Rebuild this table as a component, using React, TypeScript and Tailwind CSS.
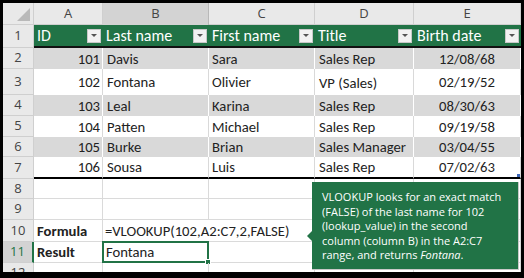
import React from "react";

const colW = ["w-[69px]", "w-[106px]", "w-[106px]", "w-[99px]", "w-[107px]"];
const letters = ["A", "B", "C", "D", "E"];
const headers = ["ID", "Last name", "First name", "Title", "Birth date"];

const people = [
  { id: 101, last: "Davis", first: "Sara", title: "Sales Rep", born: "12/08/68", h: "h-[21px]" },
  { id: 102, last: "Fontana", first: "Olivier", title: "VP (Sales)", born: "02/19/52", h: "h-[26px]" },
  { id: 103, last: "Leal", first: "Karina", title: "Sales Rep", born: "08/30/63", h: "h-[21px]" },
  { id: 104, last: "Patten", first: "Michael", title: "Sales Rep", born: "09/19/58", h: "h-[21px]" },
  { id: 105, last: "Burke", first: "Brian", title: "Sales Manager", born: "03/04/55", h: "h-[20px]" },
  { id: 106, last: "Sousa", first: "Luis", title: "Sales Rep", born: "07/02/63", h: "h-[22px]" },
];

const RowNum = ({ n, active }: { n: number; active?: boolean }) => (
  <div
    className={
      active
        ? "w-[31px] shrink-0 flex items-center justify-center bg-[#d3d3d3] border-b border-[#cfcfcf] border-r-2 border-r-[#217346] text-[#217346] text-[13px] font-['Open_Sans',sans-serif]"
        : "w-[31px] shrink-0 flex items-center justify-center bg-[#e9e9e9] border-b border-r border-[#cfcfcf] text-[#444] text-[13px] font-['Open_Sans',sans-serif]"
    }
  >
    {n}
  </div>
);

const FilterBtn = () => (
  <div className="w-[14px] h-[14px] shrink-0 flex items-center justify-center bg-[#f2f2f2] border border-[#c8c8c8]">
    <div className="w-0 h-0 border-l-[3px] border-r-[3px] border-t-[3px] border-l-transparent border-r-transparent border-t-[#555]" />
  </div>
);

const Tooltip = () => (
  <div className="absolute left-[309px] top-[179px] w-[207px] h-[88px] bg-[#217346] border-r border-b border-[#c9c9c9] pl-[10px] pt-[8px] text-white text-[11px] leading-[14.6px] font-['Open_Sans',sans-serif]">
    <div className="absolute -left-[5px] top-[49px] w-0 h-0 border-t-[5px] border-b-[5px] border-r-[5px] border-t-transparent border-b-transparent border-r-[#217346]" />
    VLOOKUP looks for an exact match
    <br />
    (FALSE) of the last name for 102
    <br />
    (lookup_value) in the second
    <br />
    column (column B) in the A2:C7
    <br />
    range, and returns <i>Fontana</i>.
  </div>
);

export default function App() {
  return (
    <div className="w-[524px] h-[278px] bg-black pt-[3px] pl-[3px]">
      <div className="relative w-[518px] h-[269px] overflow-hidden bg-white text-[#222] text-[14.67px] font-['Carlito',sans-serif]">
        {/* column letters */}
        <div className="flex h-[22px]">
          <div className="relative w-[31px] shrink-0 bg-[#e9e9e9] border-r border-b border-[#cfcfcf]">
            <div className="absolute right-[3px] bottom-[3px] w-0 h-0 border-l-[13px] border-b-[13px] border-l-transparent border-b-[#b9b9b9]" />
          </div>
          {letters.map((l, i) => (
            <div
              key={l}
              className={
                l === "B"
                  ? `${colW[i]} shrink-0 flex items-center justify-center bg-[#d3d3d3] border-r border-[#b8b8b8] text-[#444] text-[13px] font-['Open_Sans',sans-serif]`
                  : `${colW[i]} shrink-0 flex items-center justify-center bg-[#e9e9e9] border-r border-b border-[#cfcfcf] text-[#444] text-[13px] font-['Open_Sans',sans-serif]`
              }
            >
              {l}
            </div>
          ))}
        </div>

        {/* table header */}
        <div className="flex h-[23px]">
          <RowNum n={1} />
          {headers.map((h, i) => (
            <div
              key={h}
              className={`${colW[i]} shrink-0 flex items-center justify-between bg-[#217346] border-b-2 border-[#111] pl-[3px] pr-[2px] text-white text-[16px]`}
            >
              <span>{h}</span>
              <FilterBtn />
            </div>
          ))}
        </div>

        {/* table rows */}
        {people.map((p, r) => {
          const band = r % 2 === 0;
          const last = r === people.length - 1;
          const cell = `shrink-0 flex items-center border-r ${band ? "bg-[#d9d9d9] border-white" : "bg-white border-[#d9d9d9]"} ${last ? "border-b-2 border-b-black" : ""}`;
          return (
            <div key={p.id} className={`flex ${p.h}`}>
              <RowNum n={r + 2} />
              <div className={`${colW[0]} ${cell} justify-end pr-[2px]`}>{p.id}</div>
              <div className={`${colW[1]} ${cell} pl-[4px]`}>{p.last}</div>
              <div className={`${colW[2]} ${cell} pl-[3px]`}>{p.first}</div>
              <div className={`${colW[3]} ${cell} pl-[4px] ${p.id === 102 ? "items-end pb-[1px]" : ""}`}>{p.title}</div>
              <div className={`${colW[4]} ${cell} relative justify-center`}>
                {p.born}
                {last && <div className="absolute right-0 bottom-0 w-[3px] h-[3px] bg-[#3c66b8]" />}
              </div>
            </div>
          );
        })}

        {/* rows 8 - 12 */}
        {[8, 9, 10, 11, 12].map((n) => (
          <div key={n} className={`flex ${n === 10 ? "h-[22px]" : n === 8 ? "h-[20px]" : "h-[21px]"}`}>
            <RowNum n={n} active={n === 11} />
            <div className={`${colW[0]} shrink-0 flex items-center pl-[3px] border-r border-b border-[#dadada] font-bold`}>
              {n === 10 ? "Formula" : n === 11 ? "Result" : ""}
            </div>
            <div
              className={`${colW[1]} shrink-0 relative flex items-center pl-[2px] whitespace-nowrap border-b border-[#dadada] ${n === 10 ? "" : "border-r"}`}
            >
              {n === 10 && "=VLOOKUP(102,A2:C7,2,FALSE)"}
              {n === 11 && (
                <>
                  <span className="pl-[1px]">Fontana</span>
                  <div className="absolute -left-[1px] -top-[1px] -right-[1px] -bottom-[1px] border-2 border-[#217346]" />
                  <div className="absolute -right-[3px] -bottom-[3px] w-[6px] h-[6px] bg-[#217346] border border-white" />
                </>
              )}
            </div>
            <div className={`${colW[2]} shrink-0 border-b border-[#dadada] ${n === 10 ? "" : "border-r"}`} />
            <div className={`${colW[3]} shrink-0 border-r border-b border-[#dadada]`} />
            <div className={`${colW[4]} shrink-0 border-r border-b border-[#dadada]`} />
          </div>
        ))}

        <Tooltip />
      </div>
    </div>
  );
}
